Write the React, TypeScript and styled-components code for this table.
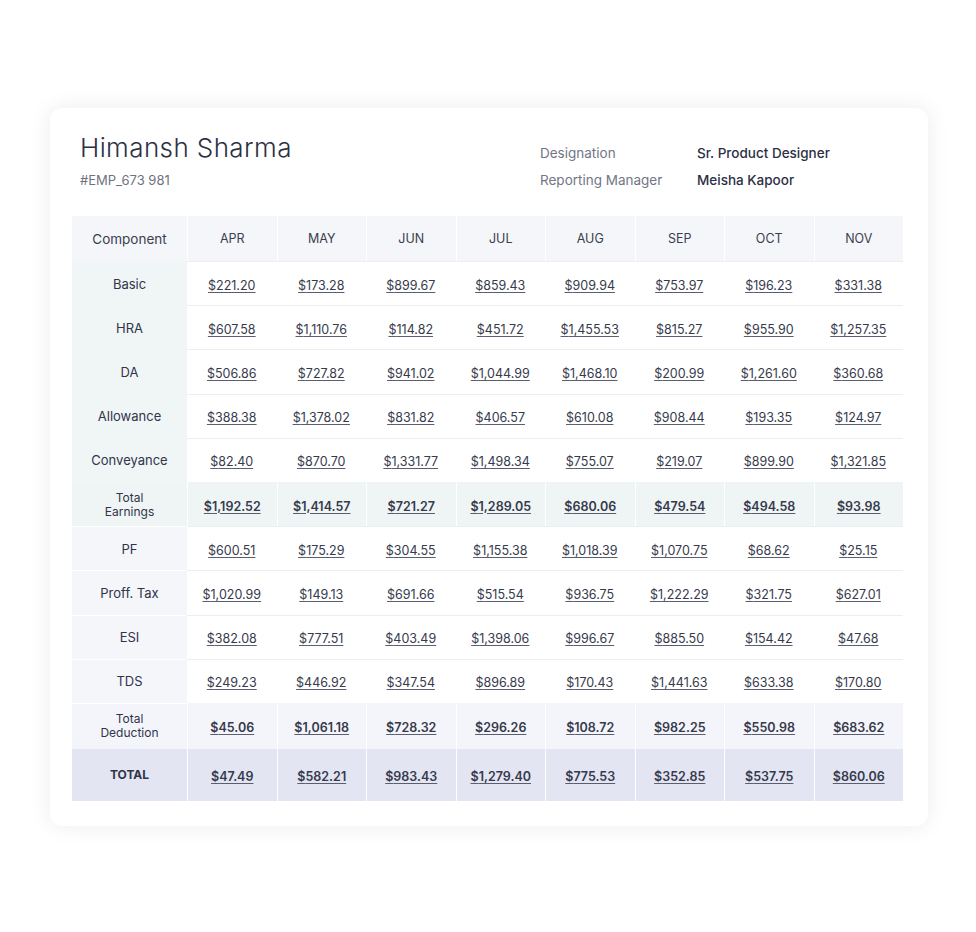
import styled, { createGlobalStyle } from 'styled-components';

type RowKind = 'earning' | 'totalEarning' | 'deduction' | 'totalDeduction' | 'grand';

interface PayRow {
  label: string;
  kind: RowKind;
  values: string[];
}

const months = ['APR', 'MAY', 'JUN', 'JUL', 'AUG', 'SEP', 'OCT', 'NOV'];

const rows: PayRow[] = [
  { label: 'Basic', kind: 'earning', values: ['221.20', '173.28', '899.67', '859.43', '909.94', '753.97', '196.23', '331.38'] },
  { label: 'HRA', kind: 'earning', values: ['607.58', '1,110.76', '114.82', '451.72', '1,455.53', '815.27', '955.90', '1,257.35'] },
  { label: 'DA', kind: 'earning', values: ['506.86', '727.82', '941.02', '1,044.99', '1,468.10', '200.99', '1,261.60', '360.68'] },
  { label: 'Allowance', kind: 'earning', values: ['388.38', '1,378.02', '831.82', '406.57', '610.08', '908.44', '193.35', '124.97'] },
  { label: 'Conveyance', kind: 'earning', values: ['82.40', '870.70', '1,331.77', '1,498.34', '755.07', '219.07', '899.90', '1,321.85'] },
  { label: 'Total Earnings', kind: 'totalEarning', values: ['1,192.52', '1,414.57', '721.27', '1,289.05', '680.06', '479.54', '494.58', '93.98'] },
  { label: 'PF', kind: 'deduction', values: ['600.51', '175.29', '304.55', '1,155.38', '1,018.39', '1,070.75', '68.62', '25.15'] },
  { label: 'Proff. Tax', kind: 'deduction', values: ['1,020.99', '149.13', '691.66', '515.54', '936.75', '1,222.29', '321.75', '627.01'] },
  { label: 'ESI', kind: 'deduction', values: ['382.08', '777.51', '403.49', '1,398.06', '996.67', '885.50', '154.42', '47.68'] },
  { label: 'TDS', kind: 'deduction', values: ['249.23', '446.92', '347.54', '896.89', '170.43', '1,441.63', '633.38', '170.80'] },
  { label: 'Total Deduction', kind: 'totalDeduction', values: ['45.06', '1,061.18', '728.32', '296.26', '108.72', '982.25', '550.98', '683.62'] },
  { label: 'TOTAL', kind: 'grand', values: ['47.49', '582.21', '983.43', '1,279.40', '775.53', '352.85', '537.75', '860.06'] },
];

const labelBg: Record<RowKind, string> = {
  earning: '#f0f6f6',
  totalEarning: '#eef5f4',
  deduction: '#f4f6fa',
  totalDeduction: '#f4f5fa',
  grand: '#e3e5f3',
};

const valueBg: Record<RowKind, string> = {
  earning: '#ffffff',
  totalEarning: '#eef5f4',
  deduction: '#ffffff',
  totalDeduction: '#f4f5fa',
  grand: '#e3e5f3',
};

const rowHeight: Record<RowKind, string> = {
  earning: '44.2px',
  totalEarning: '44.2px',
  deduction: '44.2px',
  totalDeduction: '46px',
  grand: '52px',
};

const isTotal = (kind: RowKind) => kind === 'totalEarning' || kind === 'totalDeduction' || kind === 'grand';

export default function App() {
  return (
    <>
      <GlobalStyle />
      <Page>
        <Card>
          <Header>
            <Person>
              <Name>Himansh Sharma</Name>
              <EmpId>#EMP_673 981</EmpId>
            </Person>
            <Info>
              <InfoLabel>Designation</InfoLabel>
              <InfoValue>Sr. Product Designer</InfoValue>
              <InfoLabel>Reporting Manager</InfoLabel>
              <InfoValue>Meisha Kapoor</InfoValue>
            </Info>
          </Header>
          <Table>
            <thead>
              <tr>
                <Th $first>Component</Th>
                {months.map((m) => (
                  <Th key={m}>{m}</Th>
                ))}
              </tr>
            </thead>
            <tbody>
              {rows.map((row) => (
                <tr key={row.label}>
                  <LabelCell $kind={row.kind}>
                    {row.label === 'Total Earnings' ? (
                      <>Total<br />Earnings</>
                    ) : row.label === 'Total Deduction' ? (
                      <>Total<br />Deduction</>
                    ) : (
                      row.label
                    )}
                  </LabelCell>
                  {row.values.map((v, i) => (
                    <ValueCell key={i} $kind={row.kind}>
                      <Amount $bold={isTotal(row.kind)}>${v}</Amount>
                    </ValueCell>
                  ))}
                </tr>
              ))}
            </tbody>
          </Table>
        </Card>
      </Page>
    </>
  );
}

const GlobalStyle = createGlobalStyle`
  body {
    margin: 0;
    background: #ffffff;
    font-family: Inter, 'Open Sans', sans-serif;
    color: #2f3344;
  }
`;

const Page = styled.div`
  padding: 108px 48px 100px 50px;
`;

const Card = styled.div`
  width: 878px;
  box-sizing: border-box;
  background: #fff;
  border-radius: 12px;
  box-shadow: 0 0 22px rgba(20, 30, 60, 0.08);
  padding: 24px 25px 25px 22px;
`;

const Header = styled.div`
  display: flex;
  justify-content: space-between;
  padding: 0 0 0 8px;
  height: 84px;
`;

const Person = styled.div`
  display: flex;
  flex-direction: column;
`;

const Name = styled.h1`
  margin: 0;
  font-size: 26px;
  line-height: 32px;
  font-weight: 300;
  color: #2b3044;
  letter-spacing: 0.4px;
`;

const EmpId = styled.div`
  margin-top: 8px;
  font-size: 13px;
  color: #6f7381;
`;

const Info = styled.div`
  display: grid;
  grid-template-columns: 157px 180px;
  row-gap: 9px;
  align-content: start;
  padding-top: 12px;
  margin-right: 26px;
  font-size: 13.5px;
  line-height: 18px;
`;

const InfoLabel = styled.div`
  color: #727684;
`;

const InfoValue = styled.div`
  color: #2b3044;
  font-weight: 500;
`;

const Table = styled.table`
  width: 831px;
  border-collapse: separate;
  border-spacing: 0;
  table-layout: fixed;
`;

const Th = styled.th<{ $first?: boolean }>`
  width: ${(p) => (p.$first ? '115px' : 'auto')};
  height: 45px;
  padding: 0;
  background: #f4f6f9;
  border-left: ${(p) => (p.$first ? 'none' : '1px solid #ffffff')};
  font-weight: 400;
  font-size: ${(p) => (p.$first ? '13.5px' : '12.5px')};
  color: #3a3e4f;
  text-align: center;
`;

const LabelCell = styled.td<{ $kind: RowKind }>`
  height: ${(p) => rowHeight[p.$kind]};
  box-sizing: border-box;
  padding: 0 4px;
  background: ${(p) => labelBg[p.$kind]};
  border-top: ${(p) =>
    p.$kind === 'deduction' || p.$kind === 'totalDeduction' ? '1px solid #ffffff' : '1px solid transparent'};
  text-align: center;
  line-height: 14px;
  font-size: ${(p) => (p.$kind === 'earning' || p.$kind === 'deduction' ? '13px' : '12px')};
  font-weight: ${(p) => (p.$kind === 'grand' ? 700 : 400)};
  color: #30344a;
`;

const ValueCell = styled.td<{ $kind: RowKind }>`
  padding: 0;
  box-sizing: border-box;
  background: ${(p) => valueBg[p.$kind]};
  border-left: ${(p) => (isTotal(p.$kind) ? '1px solid #ffffff' : 'none')};
  border-top: ${(p) =>
    p.$kind === 'earning' || p.$kind === 'deduction' ? '1px solid #eceef1' : '1px solid transparent'};
  text-align: center;
`;

const Amount = styled.span<{ $bold?: boolean }>`
  font-size: 12.5px;
  font-weight: ${(p) => (p.$bold ? 600 : 400)};
  color: #363a4c;
  text-decoration: underline;
  text-underline-offset: 2px;
  text-decoration-color: #5a5e6e;
`;
